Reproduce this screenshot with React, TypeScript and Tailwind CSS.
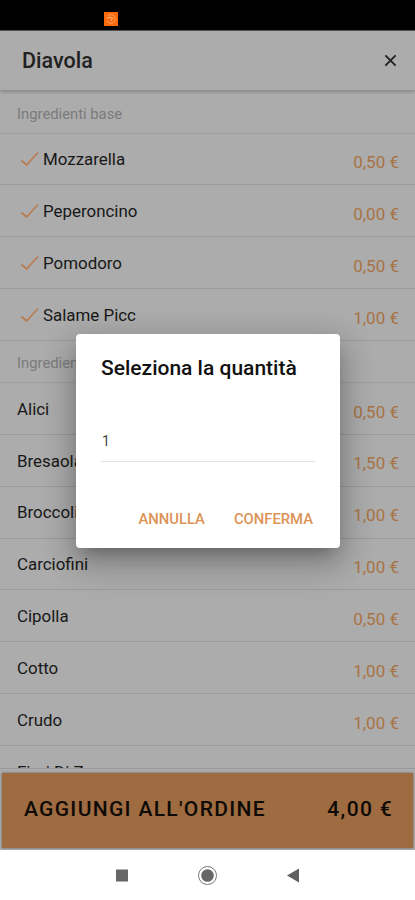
import React, { useState } from "react";

const baseIngredients = [
  { name: "Mozzarella", price: "0,50 €" },
  { name: "Peperoncino", price: "0,00 €" },
  { name: "Pomodoro", price: "0,50 €" },
  { name: "Salame Picc", price: "1,00 €" },
];

const extraIngredients = [
  { name: "Alici", price: "0,50 €" },
  { name: "Bresaola", price: "1,50 €" },
  { name: "Broccoli", price: "1,00 €" },
  { name: "Carciofini", price: "1,00 €" },
  { name: "Cipolla", price: "0,50 €" },
  { name: "Cotto", price: "1,00 €" },
  { name: "Crudo", price: "1,00 €" },
  { name: "Fiori Di Zucca", price: "1,00 €" },
];

type RowProps = {
  name: string;
  price: string;
  checked?: boolean;
};

function IngredientRow({ name, price, checked }: RowProps) {
  return (
    <div className="flex h-[51.85px] shrink-0 items-center border-b border-[#9b9b9b] pl-[17px] pr-4">
      {checked && (
        <svg className="mr-1 h-[18px] w-[22px]" viewBox="0 0 22 18" fill="none">
          <path d="M4.5 10.5 L9.5 15 L21 2.5" stroke="#b87d52" strokeWidth="1.7" />
        </svg>
      )}
      <span className="flex-1 pt-[2px] text-[16.9px] text-[#181818]">{name}</span>
      <span className="pt-[8px] text-[17px] text-[#a87345]">{price}</span>
    </div>
  );
}

function SectionLabel({ text }: { text: string }) {
  return (
    <div className="flex h-[42px] shrink-0 items-center border-b border-[#9f9f9f] pl-[17px] pt-[3px] text-[14.8px] text-[#7b7b7b]">
      {text}
    </div>
  );
}

function QuantityDialog() {
  const [quantity, setQuantity] = useState("1");

  return (
    <div className="absolute left-[76px] top-[334px] flex h-[214px] w-[264px] flex-col rounded-[4px] bg-white px-[25px] shadow-[0_11px_15px_-7px_rgba(0,0,0,0.25),0_18px_34px_3px_rgba(0,0,0,0.15),0_6px_32px_5px_rgba(0,0,0,0.13)]">
      <h2 className="mt-[19px] whitespace-nowrap text-[21px] font-medium leading-[30px] text-[#111]">
        Seleziona la quantità
      </h2>
      <input
        type="text"
        value={quantity}
        onChange={(e) => setQuantity(e.target.value)}
        className="mt-[37px] h-[42px] w-[214px] border-b border-[#e2e2e2] pl-px pt-px text-[14px] text-[#444] outline-none"
      />
      <div className="mt-[46px] flex justify-end gap-[29px] pr-[2px] text-[14.8px] font-medium text-[#dc9356]">
        <button>ANNULLA</button>
        <button>CONFERMA</button>
      </div>
    </div>
  );
}

function App() {
  return (
    <div className="relative flex h-[900px] w-[415px] flex-col overflow-hidden bg-[#acacac] font-['Roboto',sans-serif]">
      <div className="flex h-[31px] shrink-0 items-center border-b border-[#555] bg-black pl-[104px] pt-[8px]">
        <svg className="h-[14px] w-[14px]" viewBox="0 0 14 14" fill="none">
          <rect width="14" height="14" fill="#fb6a0c" />
          <path d="M4 3.7 A4.3 4.3 0 1 1 3 8.8" stroke="#ffa566" />
          <path d="M3 6 L6 5.4 M6.2 5 L8.6 6.2 L7 8.6" stroke="#ffc79c" />
        </svg>
      </div>

      <header className="z-10 flex h-[60px] shrink-0 items-center justify-between border-b border-[#929292] pl-[22px] pr-[18px] shadow-[0_1px_3px_rgba(0,0,0,0.22)]">
        <h1 className="pt-px text-[21.5px] font-medium text-[#222]">Diavola</h1>
        <svg className="h-[13px] w-[13px]" viewBox="0 0 13 13" fill="none">
          <path d="M1.4 1.4 L11.6 11.6 M11.6 1.4 L1.4 11.6" stroke="#222" strokeWidth="1.9" />
        </svg>
      </header>

      <main className="flex h-[677px] shrink-0 flex-col overflow-hidden pt-[0.6px]">
        <SectionLabel text="Ingredienti base" />
        {baseIngredients.map((item) => (
          <IngredientRow key={item.name} name={item.name} price={item.price} checked />
        ))}
        <SectionLabel text="Ingredienti extra" />
        {extraIngredients.map((item) => (
          <IngredientRow key={item.name} name={item.name} price={item.price} />
        ))}
      </main>

      <footer className="h-[82px] shrink-0 border-t border-[#989898] px-[2px] pt-[4px]">
        <button className="flex h-[75px] w-full items-center justify-between bg-[#9f6b40] pb-px pl-[22px] pr-[20px] text-[21px] font-medium text-[#0d0a07] shadow-[0_0_2px_rgba(0,0,0,0.5)]">
          <span className="tracking-[1.33px]">AGGIUNGI ALL'ORDINE</span>
          <span className="tracking-[1.33px]">4,00 €</span>
        </button>
      </footer>

      <nav className="flex h-[50px] shrink-0 items-center bg-white pl-[115px]">
        <svg className="h-[20px] w-[190px]" viewBox="0 0 190 20" fill="none">
          <rect x="1" y="4.5" width="12" height="12" fill="#666" />
          <circle cx="92.5" cy="10.5" r="9" stroke="#777" />
          <circle cx="92.5" cy="10.5" r="6.3" fill="#666" />
          <path d="M172 10.5 L184 3.5 V17.5 Z" fill="#5f5f5f" />
        </svg>
      </nav>

      <QuantityDialog />
    </div>
  );
}

export default App;
